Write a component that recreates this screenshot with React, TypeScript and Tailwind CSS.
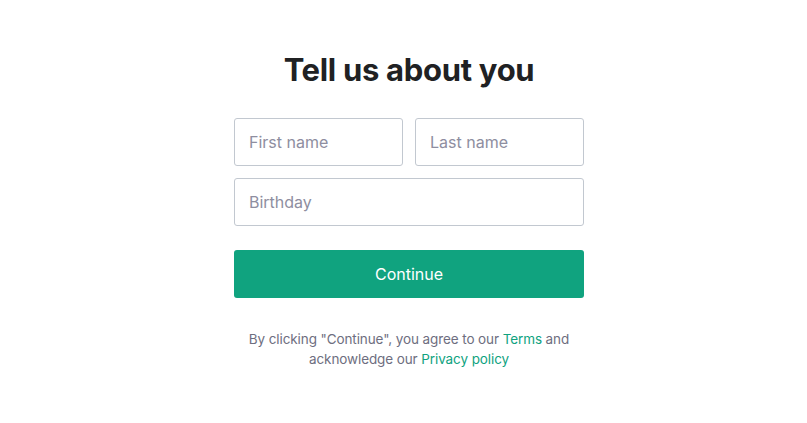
export default function App() {
	return (
		<div
			className="flex min-h-[423px] w-full flex-col items-center bg-white pl-[11px]"
			style={{ fontFamily: 'Inter, "Noto Sans", sans-serif' }}
		>
			<h1 className="mt-[50px] text-[31px] font-bold leading-[40px] tracking-[-0.3px] text-[#202123]">
				Tell us about you
			</h1>
			<form className="mt-[28px] flex w-[350px] flex-col">
				<div className="flex gap-3">
					<input
						placeholder="First name"
						className="h-[48px] w-full rounded-[3px] border border-[#c2c8d0] px-[14px] text-base text-[#2d333a] outline-none placeholder:text-[#8e8ea0]"
					/>
					<input
						placeholder="Last name"
						className="h-[48px] w-full rounded-[3px] border border-[#c2c8d0] px-[14px] text-base text-[#2d333a] outline-none placeholder:text-[#8e8ea0]"
					/>
				</div>
				<input
					placeholder="Birthday"
					className="mt-3 h-[48px] w-full rounded-[3px] border border-[#c2c8d0] px-[14px] text-base text-[#2d333a] outline-none placeholder:text-[#8e8ea0]"
				/>
				<button
					type="button"
					className="mt-6 h-[48px] w-full rounded-[3px] bg-[#10a37f] text-base text-white"
				>
					Continue
				</button>
				<p className="mt-[31px] text-center text-[13.5px] leading-5 tracking-[-0.1px] text-[#6e6e80]">
					By clicking "Continue", you agree to our{' '}
					<a className="text-[#10a37f]">Terms</a> and
					<br />
					acknowledge our <a className="text-[#10a37f]">Privacy policy</a>
				</p>
			</form>
		</div>
	);
}
